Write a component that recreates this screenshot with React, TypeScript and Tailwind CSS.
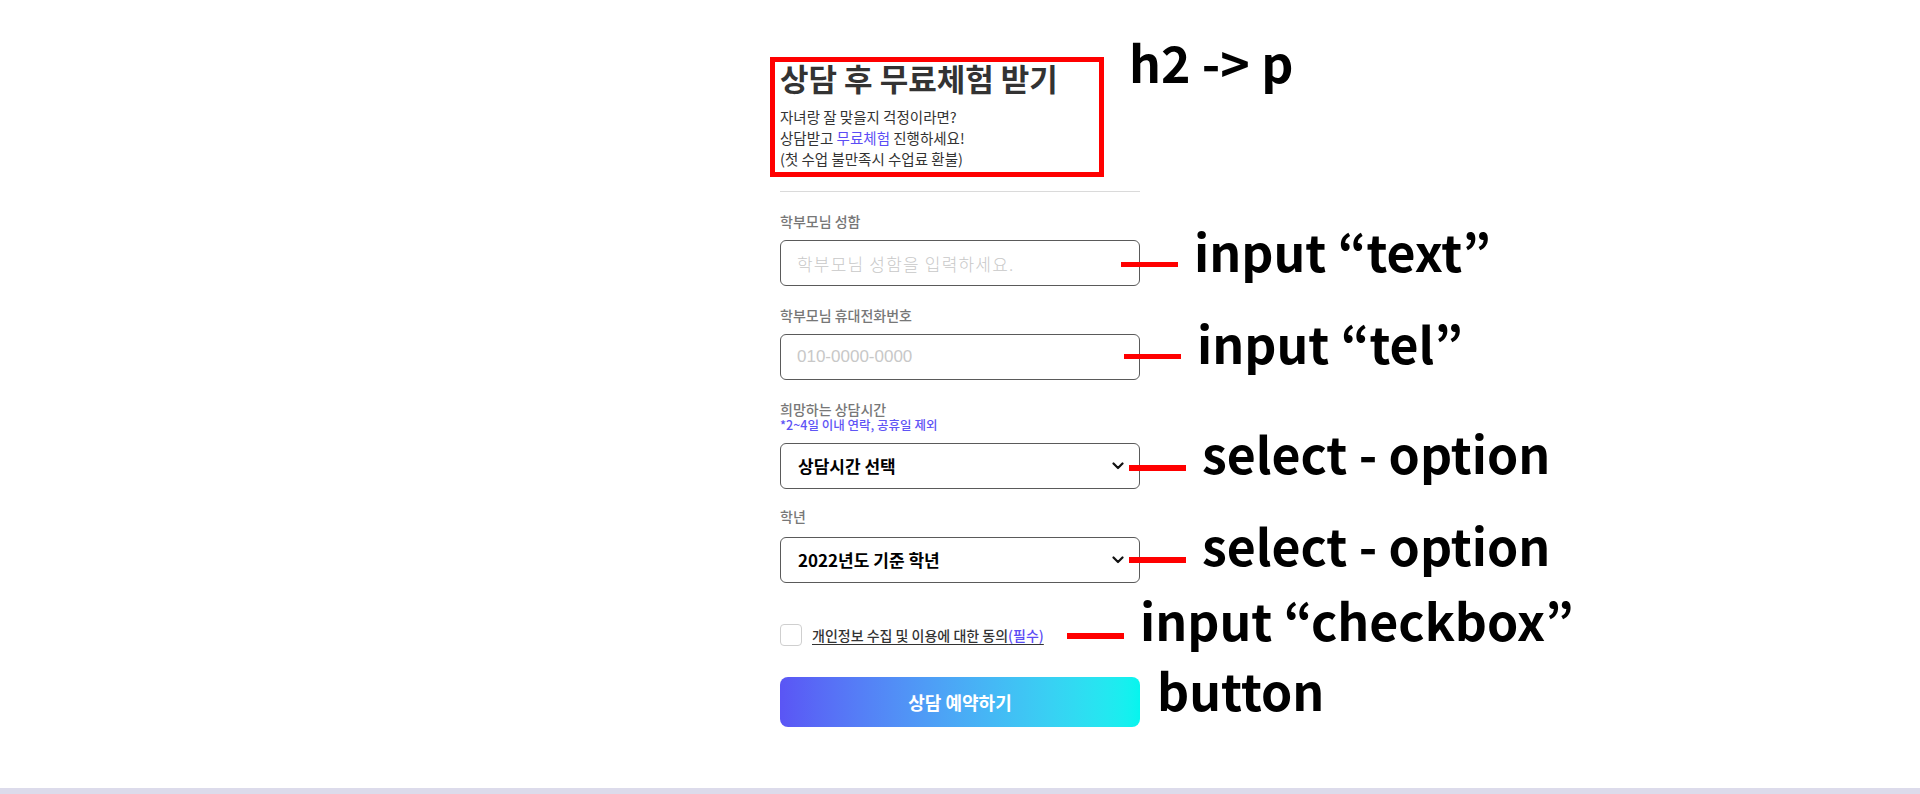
import React from 'react';

const KR = "font-['Noto_Sans_CJK_KR','Noto_Sans',sans-serif]";

const Chevron: React.FC = () => (
  <svg
    width="12"
    height="8"
    viewBox="0 0 12 8"
    className="pointer-events-none absolute right-[16px] top-1/2 -translate-y-1/2"
  >
    <path d="M1.5 1.5 L6 6 L10.5 1.5" fill="none" stroke="#111" strokeWidth="2.2" strokeLinecap="round" strokeLinejoin="round" />
  </svg>
);

interface NoteProps {
  text: string;
  left: string;
  top: string;
}

const Note: React.FC<NoteProps> = ({ text, left, top }) => (
  <span className={`absolute ${left} ${top} ${KR} whitespace-nowrap text-[50px] font-bold leading-none text-black`}>
    {text}
  </span>
);

const App: React.FC = () => {
  return (
    <div className={`flex h-[794px] flex-col bg-white ${KR}`}>
      <main className="relative flex-1">
        <div className="mx-auto w-[360px] pt-[60px]">
          {/* heading, marked with the red box */}
          <section className="relative">
            <div className="pointer-events-none absolute -left-[10px] -top-[3px] h-[120px] w-[334px] border-[5px] border-[#ff0000]" />
            <h2 className="text-[31px] font-bold leading-[36px] text-[#333]">상담 후 무료체험 받기</h2>
            <p className="mt-[10px] text-[14.5px] leading-[21px] text-[#333]">
              자녀랑 잘 맞을지 걱정이라면?
              <br />
              상담받고 <span className="text-[#5b4cf5]">무료체험</span> 진행하세요!
              <br />
              (첫 수업 불만족시 수업료 환불)
            </p>
          </section>

          <hr className="mt-[22px] border-0 border-t border-[#dadada]" />

          <form onSubmit={(e) => e.preventDefault()}>
            <label className="mt-[20px] block text-[14px] font-medium leading-[18px] text-[#777]">학부모님 성함</label>
            <input
              type="text"
              placeholder="학부모님 성함을 입력하세요."
              className="mt-[10px] block h-[46px] w-full rounded-[6px] border border-[#5a5a5a] px-[16px] text-[17px] font-light tracking-[1.2px] outline-none placeholder:text-[#c8c8c8]"
            />

            <label className="mt-[20px] block text-[14px] font-medium leading-[18px] text-[#777]">학부모님 휴대전화번호</label>
            <input
              type="tel"
              placeholder="010-0000-0000"
              className="mt-[10px] block h-[46px] w-full rounded-[6px] border border-[#5a5a5a] px-[16px] font-['Liberation_Sans',sans-serif] text-[17px] outline-none placeholder:text-[#c8c8c8]"
            />

            <label className="mt-[20px] block text-[14px] font-medium leading-[18px] text-[#777]">희망하는 상담시간</label>
            <p className="text-[12.5px] font-medium leading-[14px] text-[#5f55f5]">*2~4일 이내 연락, 공휴일 제외</p>
            <div className="relative mt-[11px]">
              <select
                defaultValue=""
                className="block h-[46px] w-full appearance-none rounded-[6px] border border-[#5a5a5a] bg-white pl-[17px] pr-[40px] text-[17px] font-bold text-black outline-none"
              >
                <option value="">상담시간 선택</option>
                <option value="am">오전 (10:00 ~ 12:00)</option>
                <option value="pm">오후 (13:00 ~ 18:00)</option>
                <option value="ev">저녁 (18:00 ~ 21:00)</option>
              </select>
              <Chevron />
            </div>

            <label className="mt-[18px] block text-[14px] font-medium leading-[18px] text-[#777]">학년</label>
            <div className="relative mt-[12px]">
              <select
                defaultValue=""
                className="block h-[46px] w-full appearance-none rounded-[6px] border border-[#5a5a5a] bg-white pl-[17px] pr-[40px] text-[17px] font-bold text-black outline-none"
              >
                <option value="">2022년도 기준 학년</option>
                <option value="e1">초등 1학년</option>
                <option value="e2">초등 2학년</option>
                <option value="e3">초등 3학년</option>
                <option value="e4">초등 4학년</option>
                <option value="e5">초등 5학년</option>
                <option value="e6">초등 6학년</option>
              </select>
              <Chevron />
            </div>

            <label className="mt-[41px] flex items-center gap-[10px]">
              <input
                type="checkbox"
                className="h-[22px] w-[22px] appearance-none rounded-[4px] border border-[#cfcfcf] bg-white"
              />
              <span className="text-[14px] font-medium text-[#333] underline underline-offset-[3px]">
                개인정보 수집 및 이용에 대한 동의<span className="text-[#5b4cf5]">(필수)</span>
              </span>
            </label>

            <button
              type="submit"
              className="mt-[31px] h-[50px] w-full rounded-[8px] bg-gradient-to-r from-[#5a55f5] to-[#05f5ee] text-[18px] font-bold text-white"
            >
              상담 예약하기
            </button>
          </form>
        </div>

        {/* annotations */}
        <Note text="h2 -> p" left="left-[1129px]" top="top-[36px]" />

        <div className="absolute left-[1121px] top-[262px] h-[5px] w-[57px] bg-[#ff0000]" />
        <Note text="input “text”" left="left-[1194px]" top="top-[225px]" />

        <div className="absolute left-[1124px] top-[354px] h-[5px] w-[57px] bg-[#ff0000]" />
        <Note text="input “tel”" left="left-[1197px]" top="top-[317px]" />

        <div className="absolute left-[1129px] top-[465px] h-[6px] w-[57px] bg-[#ff0000]" />
        <Note text="select - option" left="left-[1202px]" top="top-[427px]" />

        <div className="absolute left-[1129px] top-[557px] h-[6px] w-[57px] bg-[#ff0000]" />
        <Note text="select - option" left="left-[1202px]" top="top-[519px]" />

        <div className="absolute left-[1067px] top-[633px] h-[6px] w-[57px] bg-[#ff0000]" />
        <Note text="input “checkbox”" left="left-[1140px]" top="top-[594px]" />

        <Note text="button" left="left-[1157px]" top="top-[664px]" />
      </main>
      <div className="h-[6px] bg-[#dcdbeb]" />
    </div>
  );
};

export default App;
